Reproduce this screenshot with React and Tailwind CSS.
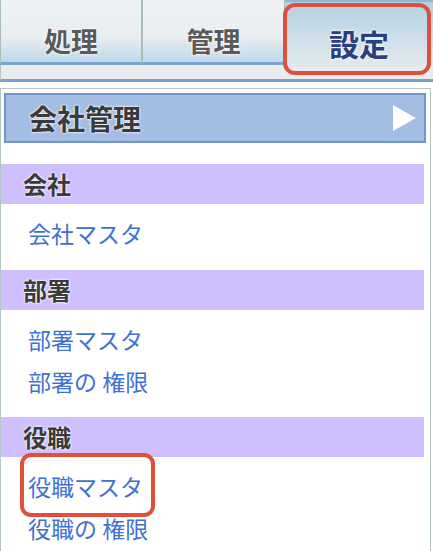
import React from "react";

const halo = "[text-shadow:0_0_2px_#fff,0_0_3px_#fff]";

function Tab({ label, w, selected }) {
  if (selected) {
    return (
      <div className={`w-[148px] h-[68px] flex items-center justify-center border-t-2 border-[#8fb6d6] bg-gradient-to-b from-[#b2d0e3] to-[#e4eaee]`}>
        <span className={`text-[30px] font-bold text-[#2b3f7c] leading-none ${halo} mt-[16px]`}>{label}</span>
      </div>
    );
  }
  return (
    <div className={`${w} h-[65px] flex items-center justify-center border-l border-r border-[#a9bdb9] border-b-[3px] border-b-[#7ba3cf] bg-gradient-to-b from-[#eef2f4] via-[#e8edf0] via-60% to-[#bfd8e8]`}>
      <span className={`text-[27px] font-bold text-[#5a5a5a] leading-none ${halo} mt-[18px]`}>{label}</span>
    </div>
  );
}

function SectionHead({ label }) {
  return (
    <div className="mr-[6px] h-[40px] bg-[#cfbfff] flex items-center pl-[22px]">
      <span className={`text-[24px] font-bold text-[#3a3a3a] leading-none ${halo}`}>{label}</span>
    </div>
  );
}

function Link({ children, boxed }) {
  return (
    <div className="h-[42px] flex items-center pl-[27px]">
      <span className="relative text-[23px] leading-none text-[#3f70d4]">
        {children}
        {boxed && (
          <span className="absolute left-[-8px] right-[-12px] top-[-22px] bottom-[-19px] border-[4px] border-[#e04e3c] rounded-[11px]" />
        )}
      </span>
    </div>
  );
}

export default function App() {
  return (
    <div className="relative w-[433px] h-[551px] overflow-hidden bg-white font-['Noto_Sans_CJK_JP','Noto_Sans',sans-serif]">
      {/* tabs */}
      <div className="flex items-start">
        <Tab label="処理" w="w-[142px]" />
        <Tab label="管理" w="w-[143px]" />
        <Tab label="設定" selected />
      </div>
      <div className="-mt-[3px] h-[17px] bg-[#e8ecef] border-l border-[#b4c6c4] border-b-[3px] border-b-[#7aa0cc]" />

      {/* panel */}
      <div className="mt-[6px] w-[431px] h-[500px] border border-[#b4c6c4] pt-[4px]">
        <div className="ml-[3px] mr-[4px] h-[50px] bg-[#a3bde3] border-2 border-[#7396c6] flex items-center justify-between pl-[23px] pr-[7px]">
          <span className={`text-[28px] font-bold text-[#3a3a3a] leading-none ${halo}`}>会社管理</span>
          <svg width="25" height="28" viewBox="0 0 25 28">
            <polygon points="1,1 24,14 1,27" fill="#ffffff" />
          </svg>
        </div>
        <div className="h-[21px]" />

        <SectionHead label="会社" />
        <div className="pt-[8px] pb-[16px]">
          <Link>会社マスタ</Link>
        </div>

        <SectionHead label="部署" />
        <div className="pt-[8px] pb-[15px]">
          <Link>部署マスタ</Link>
          <Link>部署の 権限</Link>
        </div>

        <SectionHead label="役職" />
        <div className="pt-[8px]">
          <Link boxed>役職マスタ</Link>
          <Link>役職の 権限</Link>
        </div>
      </div>

      {/* highlight around selected tab */}
      <div className="absolute left-[283px] top-[3px] w-[148px] h-[72px] border-[4px] border-[#e04e3c] rounded-[12px]" />
    </div>
  );
}
